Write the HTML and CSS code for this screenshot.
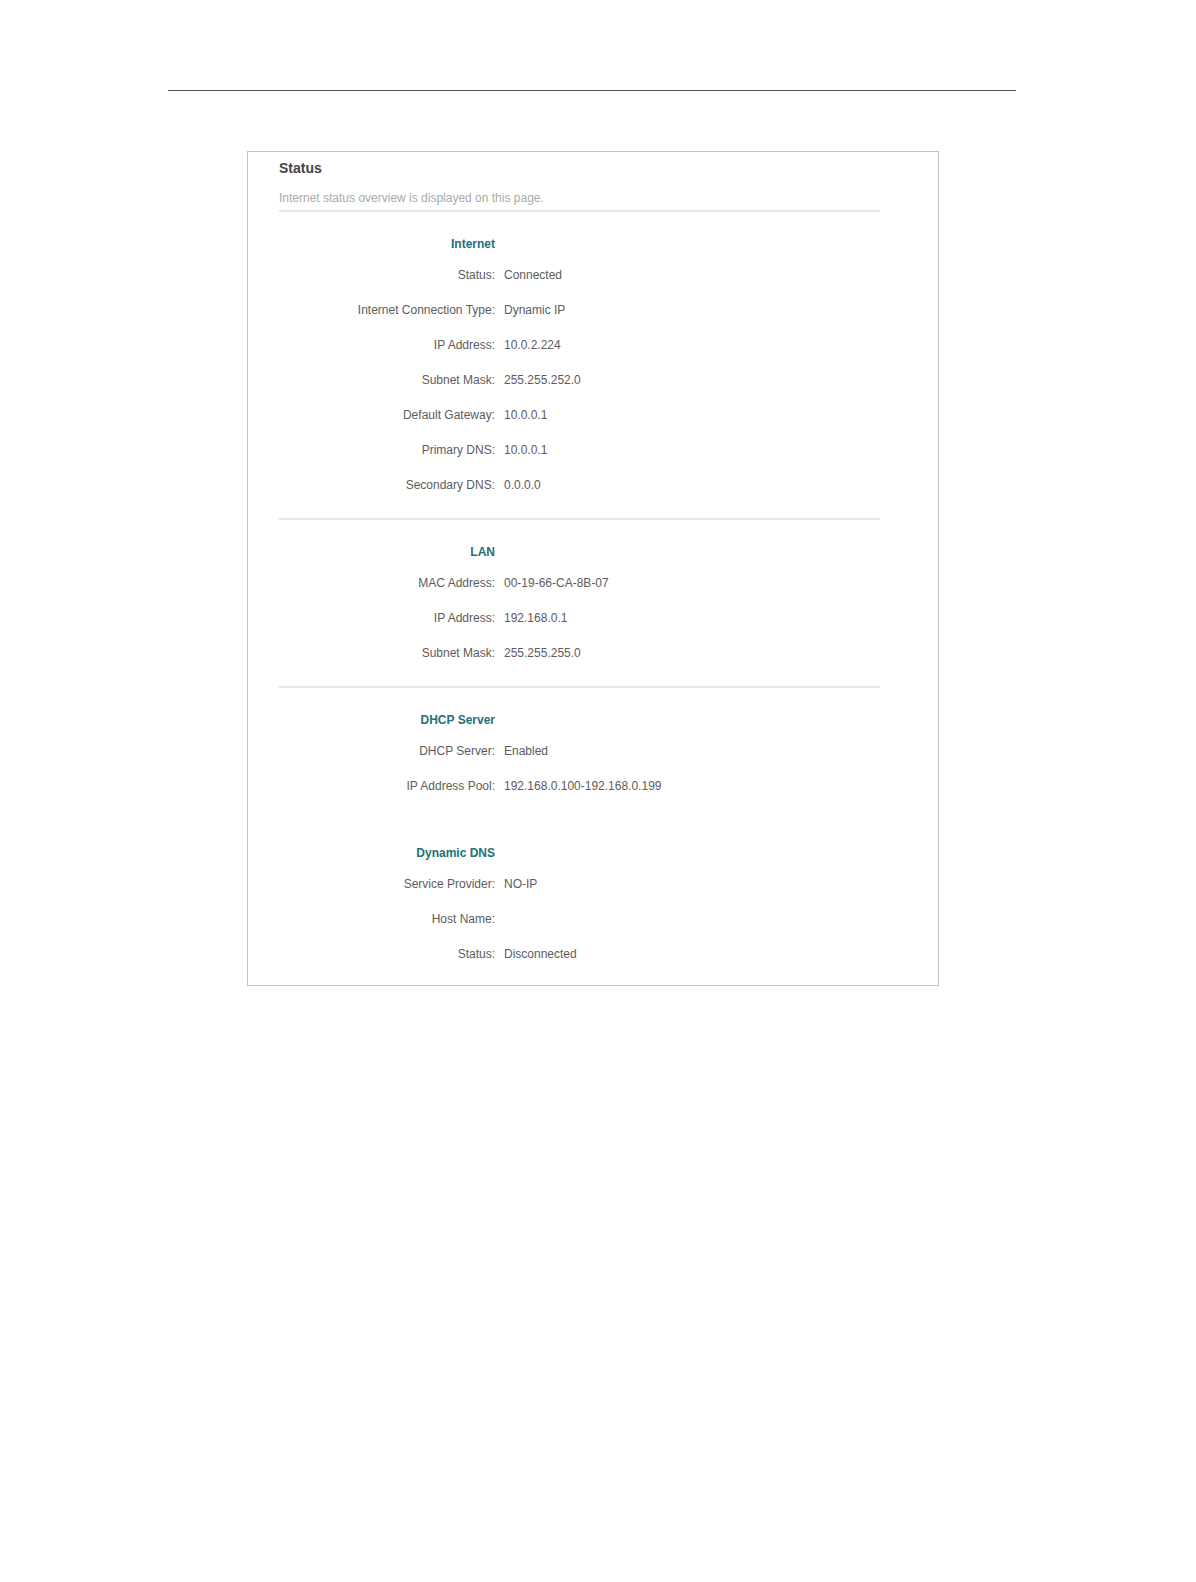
FILE: index.html
```html
<!DOCTYPE html>
<html lang="en">
<head>
  <meta charset="UTF-8">
  <title>Status</title>
  <link rel="stylesheet" href="styles.css">
</head>
<body>
  <div class="page-rule"></div>

  <div class="status-box">
    <div class="box-head">
      <h1>Status</h1>
      <p>Internet status overview is displayed on this page.</p>
    </div>

    <section class="block">
      <h2>Internet</h2>
      <div class="row"><span class="label">Status:</span><span class="value">Connected</span></div>
      <div class="row"><span class="label">Internet Connection Type:</span><span class="value">Dynamic IP</span></div>
      <div class="row"><span class="label">IP Address:</span><span class="value">10.0.2.224</span></div>
      <div class="row"><span class="label">Subnet Mask:</span><span class="value">255.255.252.0</span></div>
      <div class="row"><span class="label">Default Gateway:</span><span class="value">10.0.0.1</span></div>
      <div class="row"><span class="label">Primary DNS:</span><span class="value">10.0.0.1</span></div>
      <div class="row"><span class="label">Secondary DNS:</span><span class="value">0.0.0.0</span></div>
    </section>

    <section class="block">
      <h2>LAN</h2>
      <div class="row"><span class="label">MAC Address:</span><span class="value">00-19-66-CA-8B-07</span></div>
      <div class="row"><span class="label">IP Address:</span><span class="value">192.168.0.1</span></div>
      <div class="row"><span class="label">Subnet Mask:</span><span class="value">255.255.255.0</span></div>
    </section>

    <section class="block no-line">
      <h2>DHCP Server</h2>
      <div class="row"><span class="label">DHCP Server:</span><span class="value">Enabled</span></div>
      <div class="row"><span class="label">IP Address Pool:</span><span class="value">192.168.0.100-192.168.0.199</span></div>
    </section>

    <section class="block no-line last">
      <h2>Dynamic DNS</h2>
      <div class="row"><span class="label">Service Provider:</span><span class="value">NO-IP</span></div>
      <div class="row"><span class="label">Host Name:</span><span class="value"></span></div>
      <div class="row"><span class="label">Status:</span><span class="value">Disconnected</span></div>
    </section>
  </div>
</body>
</html>
```

FILE: styles.css
```css
body {
  margin: 0;
  background: #fff;
  font-family: "Liberation Sans", Arial, sans-serif;
  font-size: 12px;
  color: #5c5c5c;
}
.page-rule {
  margin: 90px 0 0 168px;
  width: 848px;
  border-top: 1px solid #555;
}
.status-box {
  margin: 60px 0 0 247px;
  border: 1px solid #c4c4c4;
  padding: 0 58px 0 31px;
  width: 601px;
}
.box-head {
  padding-top: 6px;
  padding-bottom: 2px;
  border-bottom: 2px solid #e4e4e4;
}
.box-head h1 {
  margin: 0;
  font-size: 14px;
  line-height: 20px;
  font-weight: bold;
  color: #444;
}
.box-head p {
  margin: 10px 0 0;
  line-height: 20px;
  color: #aaa;
}
.block {
  padding: 22px 0 16px;
  border-bottom: 2px solid #e8e8e8;
}
.block.no-line {
  border-bottom-color: transparent;
}
.block.last {
  padding-bottom: 14px;
  border-bottom: none;
}
.block h2 {
  margin: 0 0 3px;
  width: 216px;
  text-align: right;
  font-size: 12px;
  line-height: 20px;
  font-weight: bold;
  color: #22707b;
}
.row {
  display: flex;
  gap: 9px;
  height: 35px;
  align-items: center;
}
.label {
  width: 216px;
  text-align: right;
}
.value {
  flex: 1;
}
```
